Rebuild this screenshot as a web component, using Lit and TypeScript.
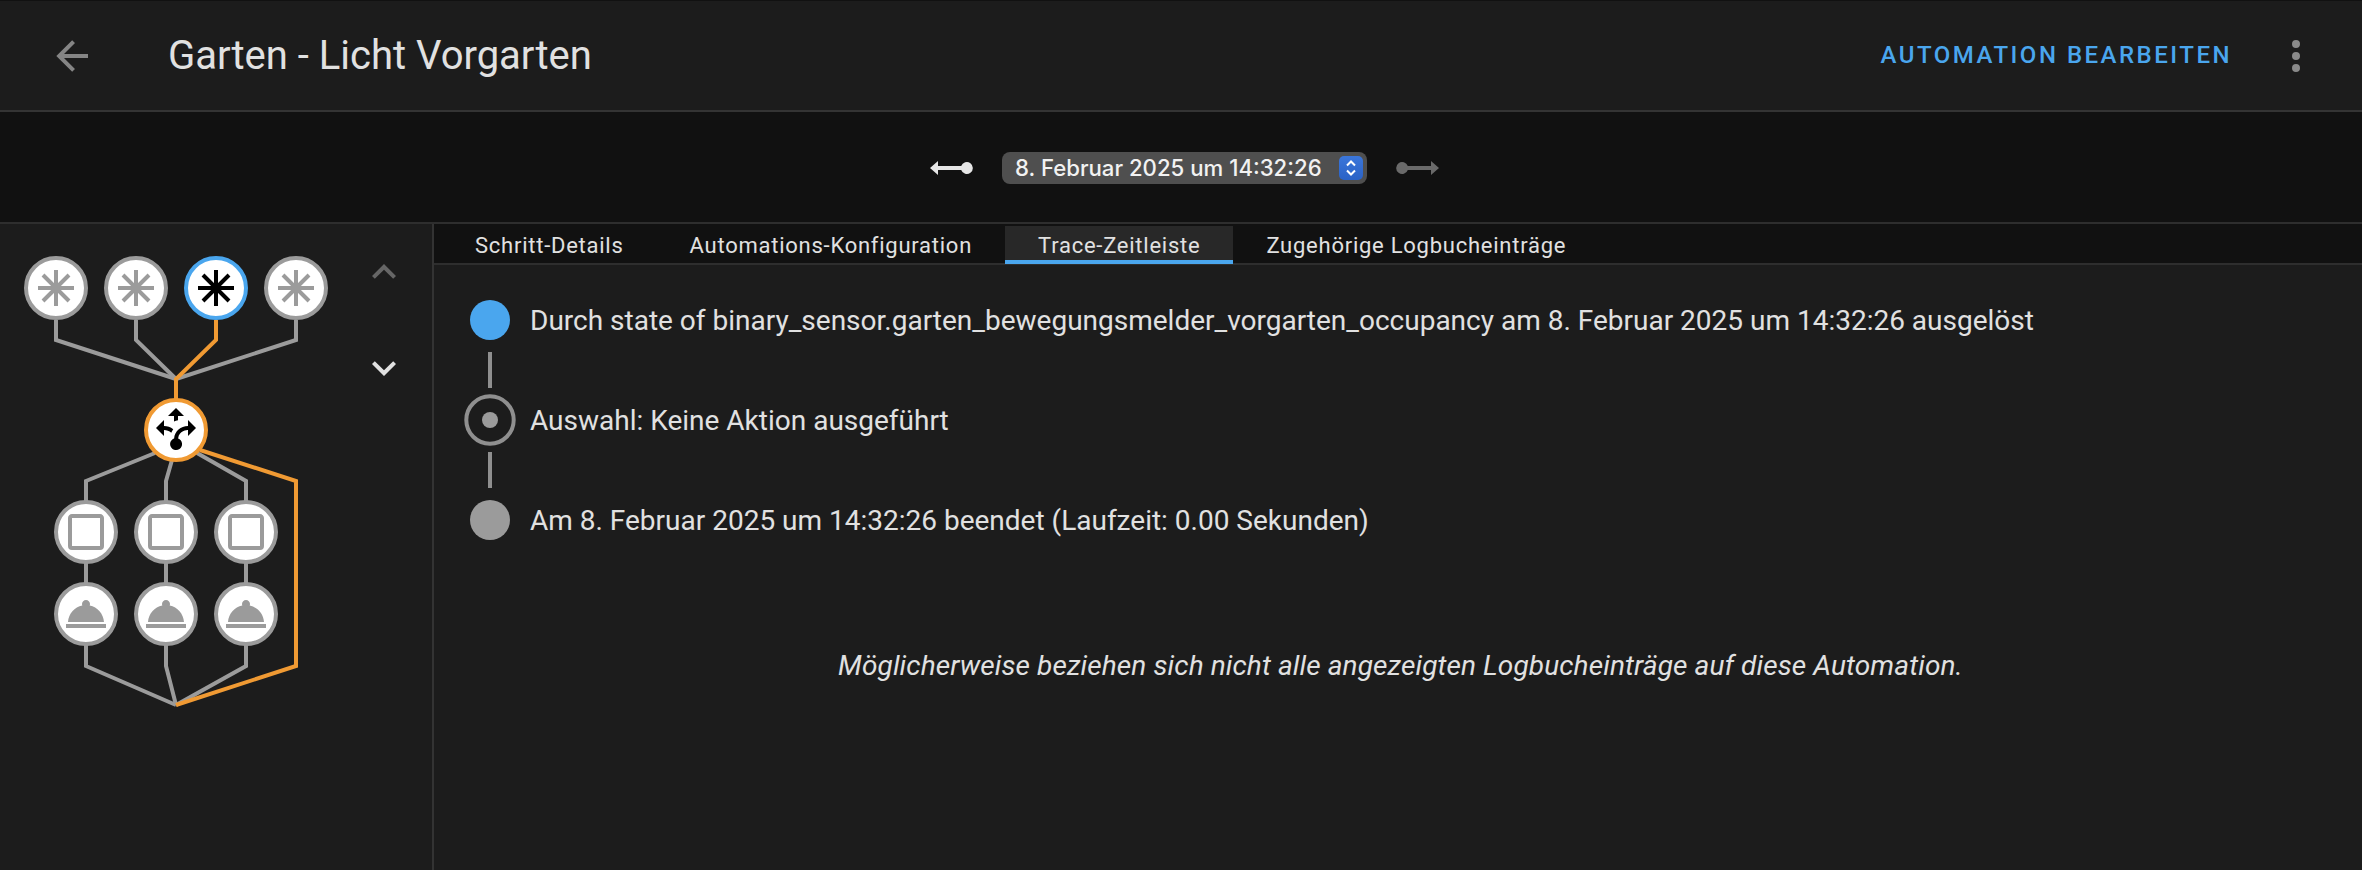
import { LitElement, html, css, svg } from "lit";
import { customElement } from "lit/decorators.js";

const GRAY = "#9b9b9b";
const ORANGE = "#f09a33";
const BLUE = "#4aa6ee";
const SQUARE = "M19,3H5C3.89,3 3,3.89 3,5V19A2,2 0 0,0 5,21H19A2,2 0 0,0 21,19V5C21,3.89 20.1,3 19,3M19,5V19H5V5H19Z";
const SERVICE = "M2 17H22V19H2V17M13.84 7.79C13.94 7.55 14 7.28 14 7C14 5.9 13.1 5 12 5S10 5.9 10 7C10 7.28 10.06 7.55 10.16 7.79C6.25 8.6 3.27 11.93 3 16H21C20.73 11.93 17.75 8.6 13.84 7.79Z";
const DECISION = "M9.64,13.4C8.63,12.5 7.34,12.03 6,12V15L2,11L6,7V10C7.67,10 9.3,10.57 10.63,11.59C10.22,12.15 9.89,12.76 9.64,13.4M18,15V12C17.5,12 13.5,12.16 13.05,16.2C14.61,16.75 15.43,18.47 14.88,20.03C14.33,21.59 12.61,22.41 11.05,21.86C9.5,21.3 8.67,19.59 9.22,18.03C9.5,17.17 10.2,16.5 11.05,16.2C11.34,12.61 14.4,10 18,10V7L22,11L18,15M13,5V7.1C12.3,7.25 11.63,7.5 11,7.81V5H8L12,1L16,5H13Z";

function line(d: string, color: string) {
  return svg`<path d=${d} fill="none" stroke=${color} stroke-width="4" stroke-linejoin="miter"></path>`;
}

function node(x: number, y: number, stroke: string, icon: unknown, dark = false) {
  return svg`<g transform="translate(${x} ${y})">
    <circle r="30" fill="#fff" stroke=${stroke} stroke-width="4"></circle>
    <g transform="translate(-24 -24) scale(2)" fill=${dark ? "#000" : GRAY} stroke=${dark ? "#000" : GRAY}>${icon}</g>
  </g>`;
}

const asterisk = svg`<path d="M12 3V21M3 12H21M5.5 5.5L18.5 18.5M18.5 5.5L5.5 18.5" fill="none" stroke-width="2"></path>`;
const pathIcon = (d: string) => svg`<path d=${d} stroke="none"></path>`;

@customElement("app-root")
export class AppRoot extends LitElement {
  static styles = css`
    :host {
      display: flex;
      flex-direction: column;
      width: 2362px;
      height: 870px;
      background: #1c1c1c;
      color: #e1e1e1;
      font-family: Roboto, sans-serif;
      overflow: hidden;
    }
    header {
      box-sizing: border-box;
      flex: none;
      height: 112px;
      display: flex;
      align-items: center;
      border-top: 1px solid #111;
      border-bottom: 2px solid #343434;
      padding: 0 42px 0 48px;
    }
    .back { width: 48px; height: 48px; fill: #858585; flex: none; }
    h1 {
      flex: 1;
      margin: 0 0 0 72px;
      font-size: 40px;
      font-weight: 400;
      color: #e1e1e1;
      line-height: 1;
    }
    .edit {
      font-size: 24px;
      font-weight: 500;
      letter-spacing: 2.5px;
      color: #4aa6ee;
      margin-bottom: 2px;
    }
    .more { width: 48px; height: 48px; fill: #8a8a8a; margin-left: 40px; flex: none; }
    .tracebar {
      box-sizing: border-box;
      flex: none;
      height: 112px;
      background: #111;
      border-bottom: 2px solid #2e2e2e;
      display: flex;
      align-items: center;
      justify-content: center;
      gap: 26px;
      padding: 1px 0 0 7px;
    }
    .ray { width: 48px; height: 48px; flex: none; }
    .ray.on { fill: #e6e6e6; }
    .ray.off { fill: #6a6a6a; }
    .select {
      box-sizing: border-box;
      width: 365px;
      height: 32px;
      background: #4f4f4f;
      border-radius: 8px;
      display: flex;
      align-items: center;
      justify-content: space-between;
      padding: 0 4px 0 13px;
      font-family: Inter, sans-serif;
      font-size: 22.2px;
      font-weight: 500;
      color: #f2f2f2;
      white-space: nowrap;
    }
    .stepper {
      width: 24px;
      height: 24px;
      border-radius: 5px;
      background: linear-gradient(#3b76da, #2a62c6);
      flex: none;
      display: flex;
    }
    .stepper svg { width: 24px; height: 24px; }
    .main { flex: 1; display: flex; min-height: 0; }
    .left {
      box-sizing: border-box;
      flex: none;
      width: 434px;
      border-right: 2px solid #333;
    }
    .graph { display: block; width: 432px; height: 646px; }
    .right { flex: 1; min-width: 0; display: flex; flex-direction: column; }
    .tabs {
      box-sizing: border-box;
      flex: none;
      height: 41px;
      background: #111;
      border-bottom: 2px solid #2e2e2e;
      display: flex;
      padding: 2px 0 0 8px;
    }
    .tab {
      box-sizing: border-box;
      height: 38px;
      padding: 0 33px;
      font-size: 22px;
      letter-spacing: 0.75px;
      line-height: 39px;
      color: #e1e1e1;
      white-space: nowrap;
    }
    .tab.active {
      background: #282828;
      border-bottom: 4px solid #4aa6ee;
    }
    .timeline { display: flex; flex-direction: column; padding: 23px 0 0 30px; }
    .row { display: flex; align-items: center; gap: 14px; height: 64px; font-size: 28px; white-space: nowrap; }
    .dot { width: 52px; height: 52px; flex: none; display: block; }
    .conn { width: 4px; height: 36px; background: #8f8f8f; margin-left: 24px; }
    .note {
      margin: 84px 0 0;
      padding-left: 5px;
      text-align: center;
      font-size: 28px;
      letter-spacing: 0.11px;
      font-style: italic;
      line-height: 60px;
    }
  `;

  render() {
    const trig = (x: number, active = false) => node(x, 64, active ? BLUE : GRAY, asterisk, active);
    return html`
      <header>
        <svg class="back" viewBox="0 0 24 24"><path d="M20,11V13H8L13.5,18.5L12.08,19.92L4.16,12L12.08,4.08L13.5,5.5L8,11H20Z"></path></svg>
        <h1>Garten - Licht Vorgarten</h1>
        <span class="edit">AUTOMATION BEARBEITEN</span>
        <svg class="more" viewBox="0 0 24 24"><path d="M12,16A2,2 0 0,1 14,18A2,2 0 0,1 12,20A2,2 0 0,1 10,18A2,2 0 0,1 12,16M12,10A2,2 0 0,1 14,12A2,2 0 0,1 12,14A2,2 0 0,1 10,12A2,2 0 0,1 12,10M12,4A2,2 0 0,1 14,6A2,2 0 0,1 12,8A2,2 0 0,1 10,6A2,2 0 0,1 12,4Z"></path></svg>
      </header>
      <div class="tracebar">
        <svg class="ray on" viewBox="0 0 24 24"><path d="M1 12L5 8.500V11H16.600A3 3 0 1 1 16.600 13H5V15.500Z"></path></svg>
        <div class="select">
          <span>8. Februar 2025 um 14:32:26</span>
          <span class="stepper"><svg viewBox="0 0 24 24"><path d="M8 9.500L12 5.500L16 9.500M8 14.500L12 18.500L16 14.500" fill="none" stroke="#fff" stroke-width="2"></path></svg></span>
        </div>
        <svg class="ray off" viewBox="0 0 24 24"><path d="M23 12L19 8.500V11H7.400A3 3 0 1 0 7.400 13H19V15.500Z"></path></svg>
      </div>
      <div class="main">
        <div class="left">
          <svg class="graph" viewBox="0 0 432 646">
            ${line("M56 96V116L176 155", GRAY)}
            ${line("M136 96V116L176 155", GRAY)}
            ${line("M296 96V116L176 155", GRAY)}
            ${line("M216 96V116L176 155V176", ORANGE)}
            ${line("M155 229L86 257V308", GRAY)}
            ${line("M172 236L166 257V308", GRAY)}
            ${line("M197 229L246 257V308", GRAY)}
            ${line("M86 308V390", GRAY)}
            ${line("M166 308V390", GRAY)}
            ${line("M246 308V390", GRAY)}
            ${line("M86 420V442L176 481", GRAY)}
            ${line("M166 420V442L176 481", GRAY)}
            ${line("M246 420V442L176 481", GRAY)}
            ${line("M200 226L296 257V442L176 481", ORANGE)}
            ${trig(56)}${trig(136)}${trig(216, true)}${trig(296)}
            ${node(176, 206, ORANGE, pathIcon(DECISION), true)}
            ${[86, 166, 246].map((x) => node(x, 308, GRAY, pathIcon(SQUARE)))}
            ${[86, 166, 246].map((x) => node(x, 390, GRAY, pathIcon(SERVICE)))}
            <g transform="translate(360 24) scale(2)" fill="#666"><path d="M7.410,15.410L12,10.830L16.590,15.410L18,14L12,8L6,14L7.410,15.410Z"></path></g>
            <g transform="translate(360 120) scale(2)" fill="#e1e1e1"><path d="M7.410,8.580L12,13.170L16.590,8.580L18,10L12,16L6,10L7.410,8.580Z"></path></g>
          </svg>
        </div>
        <div class="right">
          <div class="tabs">
            <div class="tab">Schritt-Details</div>
            <div class="tab">Automations-Konfiguration</div>
            <div class="tab active">Trace-Zeitleiste</div>
            <div class="tab">Zugehörige Logbucheinträge</div>
          </div>
          <div class="timeline">
            <div class="row">
              <svg class="dot" viewBox="0 0 52 52"><circle cx="26" cy="26" r="20" fill=${BLUE}></circle></svg>
              <span>Durch state of binary_sensor.garten_bewegungsmelder_vorgarten_occupancy am 8. Februar 2025 um 14:32:26 ausgelöst</span>
            </div>
            <div class="conn"></div>
            <div class="row">
              <svg class="dot" viewBox="0 0 52 52"><circle cx="26" cy="26" r="23.700" fill="none" stroke="#8f8f8f" stroke-width="4"></circle><circle cx="26" cy="26" r="8" fill="#9b9b9b"></circle></svg>
              <span>Auswahl: Keine Aktion ausgeführt</span>
            </div>
            <div class="conn"></div>
            <div class="row">
              <svg class="dot" viewBox="0 0 52 52"><circle cx="26" cy="26" r="20" fill="#9b9b9b"></circle></svg>
              <span>Am 8. Februar 2025 um 14:32:26 beendet (Laufzeit: 0.00 Sekunden)</span>
            </div>
          </div>
          <p class="note">Möglicherweise beziehen sich nicht alle angezeigten Logbucheinträge auf diese Automation.</p>
        </div>
      </div>
    `;
  }
}
